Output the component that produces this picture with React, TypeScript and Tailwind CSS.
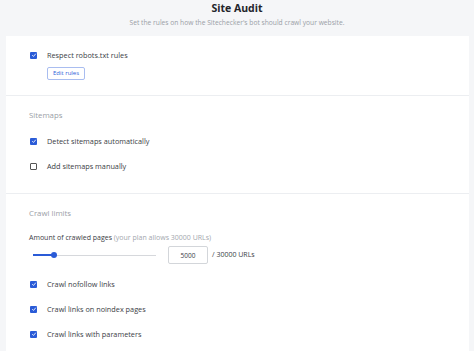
import { useState } from "react"

type CheckProps = {
  label: string
  checked: boolean
  onToggle: () => void
}

function Check({ label, checked, onToggle }: CheckProps) {
  return (
    <button onClick={onToggle} className="flex h-[10px] items-center gap-[10px] text-left">
      <span
        className={`flex h-[7px] w-[7px] items-center justify-center rounded-[1px] ${
          checked ? "bg-[#2a5bd7]" : "border border-[#555] bg-white"
        }`}
      >
        {checked && (
          <svg viewBox="0 0 10 10" className="h-[6px] w-[6px]">
            <path d="M2 5.2 L4.2 7.4 L8 2.8" fill="none" stroke="white" strokeWidth="1.4" />
          </svg>
        )}
      </span>
      <span className="text-[7.3px] leading-[10px] text-[#3a3d45]">{label}</span>
    </button>
  )
}

export default function App() {
  const [robots, setRobots] = useState(true)
  const [autoSitemaps, setAutoSitemaps] = useState(true)
  const [manualSitemaps, setManualSitemaps] = useState(false)
  const [nofollow, setNofollow] = useState(true)
  const [noindex, setNoindex] = useState(true)
  const [params, setParams] = useState(true)
  const [pages, setPages] = useState(5000)

  const pct = (pages / 30000) * 100

  return (
    <div className="h-[351px] w-[474px] overflow-hidden bg-[#f5f6f8] font-['Open_Sans',sans-serif]">
      <div className="pt-[1px] text-center">
        <h1 className="text-[10.5px] leading-[14px] font-bold text-[#23252b]">Site Audit</h1>
        <p className="mt-[3px] text-[6.7px] leading-[10px] text-[#9a9ea6]">
          Set the rules on how the Sitechecker's bot should crawl your website.
        </p>
      </div>

      <div className="mt-[8px] mr-[5px] ml-[6px] bg-white">
        <div className="border-b border-[#eceef1] pt-[14px] pb-[15px] pl-[24px]">
          <Check label="Respect robots.txt rules" checked={robots} onToggle={() => setRobots(!robots)} />
          <button className="mt-[7px] ml-[17px] block rounded-[2px] border border-[#a9bdf0] px-[5px] py-[2px] text-[6px] leading-[7px] text-[#3060d8]">
            Edit rules
          </button>
        </div>

        <div className="border-b border-[#eceef1] pt-[14px] pb-[22px] pl-[23px]">
          <div className="text-[7.8px] leading-[11px] text-[#9a9ea6]">Sitemaps</div>
          <div className="mt-[15px] flex flex-col gap-[15px] pl-[1px]">
            <Check
              label="Detect sitemaps automatically"
              checked={autoSitemaps}
              onToggle={() => setAutoSitemaps(!autoSitemaps)}
            />
            <Check
              label="Add sitemaps manually"
              checked={manualSitemaps}
              onToggle={() => setManualSitemaps(!manualSitemaps)}
            />
          </div>
        </div>

        <div className="pt-[14px] pb-[12px] pl-[23px]">
          <div className="text-[7.8px] leading-[11px] text-[#9a9ea6]">Crawl limits</div>
          <div className="mt-[14px] text-[7px] leading-[10px] text-[#3a3d45]">
            Amount of crawled pages <span className="text-[#a3a7ae]">(your plan allows 30000 URLs)</span>
          </div>
          <div className="mt-[3px] flex items-center">
            <div className="relative ml-[4px] h-[10px] w-[123px]">
              <div className="absolute top-[4.5px] left-0 h-[1px] w-full bg-[#d6d8dc]" />
              <div className="absolute top-[4px] left-0 h-[2px] bg-[#2a5bd7]" style={{ width: `${pct}%` }} />
              <div
                className="absolute top-[2px] h-[6px] w-[6px] -translate-x-1/2 rounded-full bg-[#2a5bd7]"
                style={{ left: `${pct}%` }}
              />
            </div>
            <input
              value={pages}
              onChange={(e) => setPages(Math.min(30000, Number(e.target.value) || 0))}
              className="ml-[12px] h-[18px] w-[40px] rounded-[2px] border border-[#d3d6da] text-center text-[6.5px] text-[#3a3d45] outline-none"
            />
            <span className="ml-[4px] text-[7px] text-[#3a3d45]">/ 30000 URLs</span>
          </div>
          <div className="mt-[15px] flex flex-col gap-[15px] pl-[1px]">
            <Check label="Crawl nofollow links" checked={nofollow} onToggle={() => setNofollow(!nofollow)} />
            <Check label="Crawl links on noindex pages" checked={noindex} onToggle={() => setNoindex(!noindex)} />
            <Check label="Crawl links with parameters" checked={params} onToggle={() => setParams(!params)} />
          </div>
        </div>
      </div>
    </div>
  )
}
